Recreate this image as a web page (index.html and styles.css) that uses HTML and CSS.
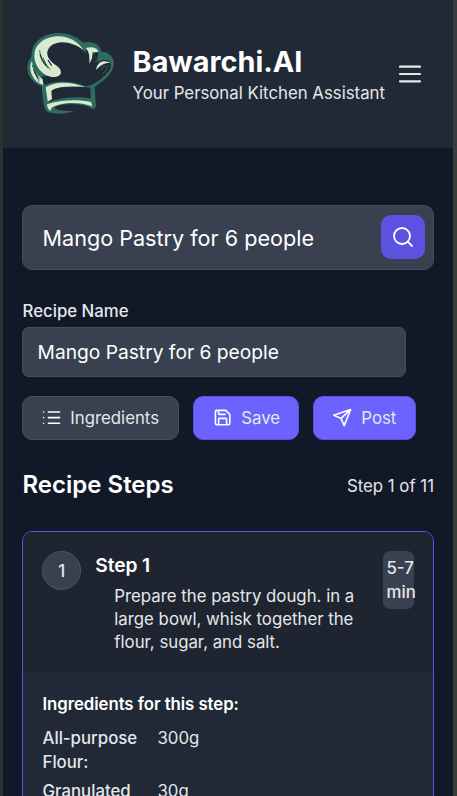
FILE: index.html
```html
<!DOCTYPE html>
<html lang="en">
<head>
<meta charset="utf-8">
<title>Bawarchi.AI</title>
<link rel="stylesheet" href="styles.css">
</head>
<body>
<div class="app">
  <header class="header">
    <svg class="logo" viewBox="0 0 300 285" aria-hidden="true">
      <path fill="#2e6b60" d="M65 184C32 170 17 142 23 119C26 105 31 99 35 94C31 62 55 38 84 29C117 18 158 24 190 53C217 46 240 58 244 80C265 79 286 98 281 121C277 149 248 170 224 186L228 246Q218 258 208 246C180 235 140 234 112 243C92 250 115 259 161 258C142 267 108 269 85 262C73 256 70 240 65 184Z"/>
      <path fill="#212936" d="M79 98C76 63 104 45 142 47C170 50 186 66 197 84L199 70C216 61 237 70 235 92L232 113C246 100 268 101 272 116C276 140 243 164 214 180L196 184C155 164 101 166 72 181L52 162C60 150 97 154 122 149C132 130 87 128 79 98Z"/>
      <path fill="#212936" d="M79 187L196 186L211 188L212 221C174 213 125 217 83 231Z"/>
      <path fill="#d8ead0" d="M105 156C72 157 45 127 43 95C41 61 68 40 100 35C139 29 172 46 192 77C160 50 116 44 92 63C72 82 83 104 108 121C129 134 127 154 105 156Z"/>
      <path fill="#d8ead0" d="M36 108C39 137 52 151 67 161L71 180C42 173 26 140 32 116Z"/>
      <path fill="#d8ead0" d="M197 69C216 63 234 69 235 82C223 78 220 86 218 96L208 116C209 94 208 81 197 69ZM228 134C233 108 253 104 271 114C255 112 244 119 228 134Z"/>
      <path fill="#d8ead0" d="M77 187C101 169 149 168 196 186C151 183 104 185 94 199L96 222L83 230ZM81 238C121 223 180 224 213 231L217 244C180 230 122 230 94 249L91 258C84 254 81 244 81 238Z"/>
      <path fill="none" stroke="#2e6b60" stroke-width="3" d="M59 76Q60 108 84 129M69 98Q75 119 91 134M37 120Q44 149 60 163M44 142L58 171M238 88Q233 102 226 111M248 147Q259 137 265 122M243 134L257 120"/>
      <path fill="none" stroke="#212936" stroke-width="3.5" d="M61 88Q67 110 80 122M84 105L95 122M41 134Q46 148 55 158M220 81Q217 94 219 105"/>
    </svg>
    <div class="brand">
      <h1>Bawarchi.AI</h1>
      <p>Your Personal Kitchen Assistant</p>
    </div>
    <svg class="menu" viewBox="0 0 22 18"><path d="M1 1.7h20M1 9h20M1 16.3h20"/></svg>
  </header>
  <main class="main">
    <div class="search">
      <span>Mango Pastry for 6 people</span>
      <button class="search-btn" aria-label="Search"><svg class="icon" viewBox="0 0 24 24"><circle cx="11" cy="11" r="8"/><path d="m21 21-4.3-4.3"/></svg></button>
    </div>
    <div class="label">Recipe Name</div>
    <div class="name">Mango Pastry for 6 people</div>
    <div class="actions">
      <button class="btn ingredients"><svg class="icon" viewBox="0 0 24 24"><path d="M8 5h14M8 12h14M8 19h14M2 5h.01M2 12h.01M2 19h.01"/></svg>Ingredients</button>
      <button class="btn primary save"><svg class="icon" viewBox="0 0 24 24"><path d="M15.2 3a2 2 0 0 1 1.4.6l3.8 3.8a2 2 0 0 1 .6 1.4V19a2 2 0 0 1-2 2H5a2 2 0 0 1-2-2V5a2 2 0 0 1 2-2zM17 21v-7a1 1 0 0 0-1-1H8a1 1 0 0 0-1 1v7M7 3v4a1 1 0 0 0 1 1h7"/></svg>Save</button>
      <button class="btn primary post"><svg class="icon" viewBox="0 0 24 24"><path d="m22 2-8 20-4-9-9-4ZM22 2 10 13"/></svg>Post</button>
    </div>
    <div class="steps-head">
      <h2>Recipe Steps</h2>
      <span>Step 1 of 11</span>
    </div>
    <section class="card">
      <div class="card-head">
        <div class="num">1</div>
        <div class="step">
          <h3>Step 1</h3>
          <p>Prepare the pastry dough. in a large bowl, whisk together the flour, sugar, and salt.</p>
        </div>
        <div class="time">5-7<br>min</div>
      </div>
      <div class="card-body">
        <h4>Ingredients for this step:</h4>
        <div class="row"><b>All-purpose Flour:</b><span>300g</span></div>
        <div class="row"><b>Granulated</b><span>30g</span></div>
      </div>
    </section>
  </main>
</div>
</body>
</html>
```
FILE: styles.css
```css
* { box-sizing: border-box; margin: 0; padding: 0; }
html, body { height: 796px; overflow: hidden; }
body { font-family: Inter, "Liberation Sans", sans-serif; font-size: 16.8px; line-height: 24px; color: #e5e7eb; background: #111827; }
.app { height: 796px; overflow: hidden; border-left: 3px solid #303030; border-right: 4px solid #3b3b3b; }
.header { height: 148px; background: #212936; display: flex; align-items: center; padding: 0 32px 0 17px; border-bottom: 1px solid #1c2432; }
.logo { width: 100px; height: 95px; flex: none; margin-top: -2px; }
.brand { margin-left: 12.6px; flex: 1; white-space: nowrap; padding-top: 5px; }
.brand h1 { font-size: 28.8px; line-height: 34px; font-weight: 700; color: #fff; }
.brand p { line-height: 28px; }
.menu { width: 22px; height: 18px; flex: none; }
.menu path { stroke: #e5e7eb; stroke-width: 2.2; stroke-linecap: round; }
.main { padding: 57px 19px 0; }
.search { height: 65px; display: flex; align-items: center; justify-content: space-between; padding: 0 8.5px 0 19.5px; background: #394150; border: 1px solid #464e5c; border-radius: 10px; font-size: 21.6px; color: #fff; }
.search-btn { width: 43.5px; height: 43.5px; display: grid; place-items: center; background: #5b52e0; border: 0; border-radius: 10px; margin-top: -1px; }
.icon { width: 19.2px; height: 19.2px; flex: none; fill: none; stroke: #fff; stroke-width: 2; stroke-linecap: round; stroke-linejoin: round; }
.search-btn .icon { width: 24px; height: 24px; stroke-width: 1.8; }
.label { margin-top: 29px; padding-left: .5px; font-weight: 500; }
.name { margin-top: 4px; width: 384px; height: 50px; display: flex; align-items: center; padding: 0 14.6px; background: #394150; border: 1px solid #464e5c; border-radius: 7px; font-size: 19.2px; color: #fff; }
.actions { display: flex; gap: 14px; margin-top: 19px; }
.btn { height: 44px; display: flex; align-items: center; gap: 9.6px; padding: 0 18.5px; border: 1px solid #464e5c; border-radius: 10px; background: #394150; color: #e5e7eb; font: inherit; }
.ingredients { width: 157px; }
.save { width: 106px; }
.post { width: 103px; }
.primary { background: #6c63ff; border-color: #5b52e0; }
.steps-head { display: flex; align-items: center; justify-content: space-between; margin-top: 28px; height: 33px; }
.steps-head h2 { padding-left: .5px; font-size: 24px; font-weight: 600; color: #fff; }
.steps-head span { padding-top: 2px; }
.card { margin-top: 30px; height: 400px; border: 1px solid #5b52e0; border-radius: 10px; background: #212936; overflow: hidden; }
.card-head { height: 141px; display: flex; padding: 19px 19px 19px 19.3px; background: #1f2530; }
.num { width: 39px; height: 39px; flex: none; display: grid; place-items: center; background: #394150; border: 1px solid #4b5563; border-radius: 50%; font-weight: 500; }
.step { flex: 1; min-width: 0; margin-left: 14px; }
.step h3 { font-size: 19.2px; line-height: 29px; font-weight: 600; letter-spacing: -.1px; color: #fff; }
.step p { margin: 5px 0 0 19px; width: 250px; line-height: 23px; }
.time { width: 31px; height: 58px; flex: none; padding: 5px 0 0 3.5px; background: #394150; border-radius: 7px; font-weight: 500; white-space: nowrap; }
.card-body { padding: 19px 19.5px; }
.card-body h4 { font-size: 16.8px; font-weight: 600; letter-spacing: -.06px; color: #fff; }
.row { display: grid; grid-template-columns: 96px 1fr; gap: 19px; margin-top: 5px; }
h4 + .row { margin-top: 10px; }
.row b { font-weight: 500; }
```
